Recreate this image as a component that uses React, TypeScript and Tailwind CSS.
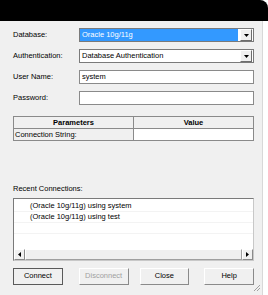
import React from "react";

const font = { fontFamily: '"Liberation Sans", Arial, sans-serif' };

function DropArrow() {
  return (
    <div className="flex h-[12px] w-[12px] items-center justify-center border border-t-white border-l-white border-b-[#6d6d6d] border-r-[#6d6d6d] bg-[#f0f0f0]">
      <svg width="5" height="3" viewBox="0 0 5 3">
        <path d="M0 0h5L2.5 3z" fill="#000" />
      </svg>
    </div>
  );
}

function Select({ value, selected }: { value: string; selected?: boolean }) {
  return (
    <div className="flex h-[14px] w-[175px] items-center border border-[#7a7a7a] bg-white pr-px">
      <div
        className={
          "flex h-full flex-1 items-center pl-[2px] " +
          (selected ? "bg-[#3399ff] text-white" : "text-black")
        }
      >
        {value}
      </div>
      <div className="ml-[2px]">
        <DropArrow />
      </div>
    </div>
  );
}

function TextBox({ value }: { value?: string }) {
  return (
    <div className="flex h-[14px] w-[175px] items-center border border-[#8a8a8a] bg-white pl-[2px] text-black">
      {value}
    </div>
  );
}

function Row({ label, children }: { label: string; children: React.ReactNode }) {
  return (
    <div className="flex items-center">
      <div className="w-[66px] text-black">{label}</div>
      {children}
    </div>
  );
}

function Btn({ label, def, disabled, className = "" }: { label: string; def?: boolean; disabled?: boolean; className?: string }) {
  const border = def
    ? "border border-[#5a5a5a]"
    : "border border-t-white border-l-white border-b-[#8a8a8a] border-r-[#8a8a8a]";
  return (
    <div
      className={
        "flex h-[17px] w-[50px] items-center justify-center bg-[#f0f0f0] " +
        border +
        " " +
        (disabled ? "text-[#a0a0a0]" : "text-black") +
        " " +
        className
      }
    >
      {label}
    </div>
  );
}

function ScrollBtn({ dir }: { dir: "l" | "r" }) {
  return (
    <div className="flex h-[11px] w-[11px] items-center justify-center border border-t-white border-l-white border-b-[#8a8a8a] border-r-[#8a8a8a] bg-[#f0f0f0]">
      <svg width="3" height="5" viewBox="0 0 3 5">
        <path d={dir === "l" ? "M3 0v5L0 2.5z" : "M0 0v5l3-2.5z"} fill="#000" />
      </svg>
    </div>
  );
}

export default function App() {
  return (
    <div className="h-[295px] w-[268px] overflow-hidden bg-white text-[7.5px] leading-none" style={font}>
      <div className="h-[21px] w-[268px] rounded-tr-[8px] bg-black" />
      <div className="relative h-[274px] w-[263px] border-r border-[#d8d8d8] bg-[#f0f0f0] pl-[13px] pt-[7px]">
        {/* Form fields */}
        <div className="flex flex-col gap-[7px]">
          <Row label="Database:">
            <Select value="Oracle 10g/11g" selected />
          </Row>
          <Row label="Authentication:">
            <Select value="Database Authentication" />
          </Row>
          <Row label="User Name:">
            <TextBox value="system" />
          </Row>
          <Row label="Password:">
            <TextBox />
          </Row>
        </div>

        {/* Parameters table */}
        <div className="mt-[11px] w-[241px] border border-[#8a8a8a]">
          <div className="flex h-[12px] border-b border-[#8a8a8a] font-bold text-black">
            <div className="flex w-[120px] items-center justify-center border-r border-[#8a8a8a]">Parameters</div>
            <div className="flex flex-1 items-center justify-center">Value</div>
          </div>
          <div className="flex h-[11px] text-black">
            <div className="flex w-[120px] items-center border-r border-[#8a8a8a] bg-[#f0f0f0] pl-px">Connection String:</div>
            <div className="flex-1 bg-white" />
          </div>
        </div>

        {/* Recent connections */}
        <div className="mt-[44px] text-black">Recent Connections:</div>
        <div className="mt-[5px] flex h-[63px] w-[241px] flex-col border border-t-[#7a7a7a] border-l-[#7a7a7a] border-b-[#c8c8c8] border-r-[#c8c8c8] bg-white">
          <div className="flex-1 pt-[2px]">
            <div className="flex h-[11px] items-center border-b border-[#f3f3f3] pl-[16px] text-black">(Oracle 10g/11g) using system</div>
            <div className="flex h-[11px] items-center border-b border-[#f3f3f3] pl-[16px] text-black">(Oracle 10g/11g) using test</div>
            <div className="h-[11px] border-b border-[#f3f3f3]" />
            <div className="h-[11px]" />
          </div>
          <div className="flex h-[11px] items-center bg-[#f4f4f4]">
            <ScrollBtn dir="l" />
            <div className="h-[11px] flex-1 border border-t-white border-l-white border-b-[#a0a0a0] border-r-[#a0a0a0] bg-[#f0f0f0]" />
            <ScrollBtn dir="r" />
          </div>
        </div>

        {/* Buttons */}
        <div className="mt-[7px] flex w-[241px]">
          <Btn label="Connect" def />
          <Btn label="Disconnect" disabled className="ml-[16px] w-[49px]" />
          <Btn label="Close" className="ml-[11px]" />
          <Btn label="Help" className="ml-[15px]" />
        </div>

        {/* Resize grip */}
        <svg className="absolute bottom-[3px] right-[1px]" width="9" height="9" viewBox="0 0 9 9">
          <path d="M8 2L2 8M8 5L5 8M8 8" stroke="#a0a0a0" strokeWidth="1" />
        </svg>
      </div>
    </div>
  );
}
